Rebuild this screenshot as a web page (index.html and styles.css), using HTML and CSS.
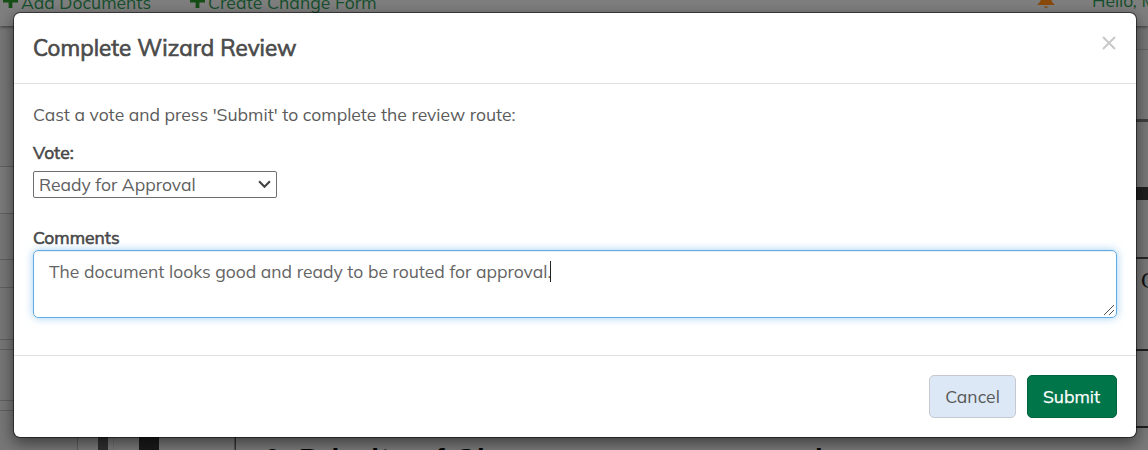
FILE: index.html
```html
<!DOCTYPE html>
<html lang="en">
<head>
<meta charset="utf-8">
<title>Complete Wizard Review</title>
<link rel="stylesheet" href="styles.css">
</head>
<body>
<div class="page">
  <header class="topbar">
    <svg class="plus" viewBox="0 0 16 16"><path d="M6 0h4v6h6v4h-6v6H6v-6H0V6h6z"/></svg>
    <span class="nav nav-add">Add Documents</span>
    <svg class="plus" viewBox="0 0 16 16"><path d="M6 0h4v6h6v4h-6v6H6v-6H0V6h6z"/></svg>
    <span class="nav nav-create">Create Change Form</span>
    <svg class="bell" viewBox="0 0 18 20"><path d="M9 0C5 1 4 4 4 8c0 4-1 5.500-4 8h18c-3-2.500-4-4-4-8 0-4-1-7-5-8zM6.500 17.500h5L9 19.500z"/></svg>
    <span class="nav nav-user">Hello, M</span>
  </header>
  <main class="content">
    <div class="side">
      <div class="row r1"></div><div class="row r2"></div><div class="row r3"></div><div class="row r4"></div><div class="row r5"></div><div class="row r6"></div><div class="row r7"></div><div class="row r8"></div>
    </div>
    <div class="sheet">
      <span class="bar bar-a"></span><span class="bar bar-b"></span><span class="bar bar-c"></span><span class="bar bar-d"></span><span class="bar bar-e"></span>
      <div class="doc-title"><span>6. Priority of Ch</span><span>i</span></div>
    </div>
    <div class="edge">
      <div class="e e1"></div><div class="e e2"></div><div class="e e3"></div><div class="e e4"></div><div class="e e5">C</div><div class="e e6"></div>
    </div>
  </main>
</div>
<div class="modal">
  <div class="modal-header">
    <h4 class="title">Complete Wizard Review</h4>
    <svg class="close" viewBox="0 0 14 14"><path d="M1 1l12 12M13 1L1 13"/></svg>
  </div>
  <div class="modal-body">
    <p class="intro">Cast a vote and press 'Submit' to complete the review route:</p>
    <div class="label label-vote">Vote:</div>
    <div class="select"><span class="select-text">Ready for Approval</span><svg class="chevron" viewBox="0 0 12 8"><path d="M1 1l5 5 5-5"/></svg></div>
    <div class="label label-comments">Comments</div>
    <div class="textarea"><span class="comment-text">The document looks good and ready to be routed for approval.</span><span class="caret"></span><svg class="grip" viewBox="0 0 10 10"><path d="M0 10L10 0M5 10l5-5"/></svg></div>
  </div>
  <div class="modal-footer">
    <button class="btn cancel"><span>Cancel</span></button>
    <button class="btn submit"><span>Submit</span></button>
  </div>
</div>
</body>
</html>
```
FILE: styles.css
```css
* { box-sizing: border-box; }
body { margin: 0; width: 1148px; height: 450px; overflow: hidden; position: relative; font-family: Muli, Mulish, Lato, sans-serif; background: #777; color: #505050; }
.page { height: 450px; display: flex; flex-direction: column; }
.topbar { height: 26px; flex: none; display: flex; align-items: flex-start; background: #7f7f7f; box-shadow: 0 1px 3px rgba(0,0,0,.5); z-index: 1; padding-left: 3px; }
.plus { width: 15px; height: 15px; margin-top: -7px; fill: #164f16; flex: none; }
.nav { font-size: 17.5px; line-height: 22px; margin-top: -9px; color: #164f2c; white-space: nowrap; flex: none; }
.nav-add { margin-left: 3px; width: 169px; }
.nav-create { margin-left: 3px; width: 829px; letter-spacing: .08px; }
.bell { width: 18px; height: 20px; margin-top: -11px; fill: #8a4a0a; flex: none; }
.nav-user { margin-left: 37px; margin-top: -11px; width: 80px; }
.content { flex: 1; display: flex; min-height: 0; }
.side { width: 78px; border-right: 1px solid #5c5c5c; background: #777; }
.row { border-bottom: 1px solid #606060; }
.r1 { height: 141px; } .r2 { height: 47px; background: #7b7b7b; } .r3 { height: 46px; }
.r4 { height: 28px; } .r5 { height: 52px; } .r6 { height: 10px; } .r7 { height: 51px; } .r8 { height: 10px; }
.sheet { flex: 1; display: flex; background: #7a7a7a; overflow: hidden; }
.bar { flex: none; }
.bar-a { width: 10px; margin-left: 20px; background: #303030; }
.bar-b { width: 1px; margin-left: 5px; background: #707070; }
.bar-c { width: 20px; margin-left: 25px; background: #1a1a1a; }
.bar-d { width: 1px; margin-left: 75px; background: #555; }
.bar-e { width: 1px; background: #333; }
.doc-title { display: flex; margin: 417px 0 0 28px; font: bold 28px/32px "Liberation Sans", sans-serif; letter-spacing: 1.35px; color: #050505; white-space: nowrap; }
.doc-title span:first-child { width: 551px; }
.edge { width: 12px; overflow: hidden; background: #7a7a7a; }
.e1 { height: 24px; border-bottom: 1px solid #666; background: #777; }
.e2 { height: 72px; border-bottom: 3px solid #414141; }
.e3 { height: 78px; border-bottom: 13px solid #202020; }
.e4 { height: 59px; border-bottom: 2px solid #282828; }
.e5 { height: 92px; border-bottom: 2px solid #202020; font: 23px/44px "Liberation Serif", serif; color: #111; padding-left: 5px; }
.e6 { height: 77px; border-bottom: 2px solid #202020; }
.modal { position: absolute; left: 13px; top: 12px; width: 1124px; height: 426px; border: 1px solid rgba(0,0,0,.5); background: #fff; background-clip: padding-box; border-radius: 7px; box-shadow: 0 5px 15px rgba(0,0,0,.5); display: flex; flex-direction: column; z-index: 2; }
.modal-header { height: 71px; flex: none; border-bottom: 1px solid #e2e2e2; display: flex; justify-content: space-between; padding: 0 20px 0 19px; }
.title { margin: 21px 0 0; font-size: 22.4px; line-height: 28px; font-weight: 400; letter-spacing: .07px; color: #4b4b4b; -webkit-text-stroke: .7px #4b4b4b; white-space: nowrap; }
.close { width: 14px; height: 14px; margin-top: 23px; fill: none; stroke: #c8c8c8; stroke-width: 2; }
.modal-body { height: 271px; flex: none; padding: 19px 19px 0; }
.intro { margin: 0; height: 24px; font-size: 17.5px; line-height: 22px; color: #5b5b5b; white-space: nowrap; }
.label { font-size: 17.5px; line-height: 22px; color: #484848; -webkit-text-stroke: .6px #484848; }
.label-vote { margin-top: 14px; height: 30px; }
.select { width: 244px; height: 27px; border: 1px solid #6e6e6e; border-radius: 2px; display: flex; align-items: center; justify-content: space-between; padding: 0 5px; }
.select-text { height: 24px; font-size: 17.5px; line-height: 22px; color: #606060; white-space: nowrap; }
.chevron { width: 13px; height: 9px; fill: none; stroke: #444; stroke-width: 2; }
.label-comments { margin-top: 28px; height: 24px; }
.textarea { position: relative; height: 68px; border: 1px solid #5fade8; border-radius: 5px; box-shadow: 0 0 8px rgba(102,175,233,.6), inset 0 1px 1px rgba(0,0,0,.07); padding: 9px 15px; display: flex; align-items: flex-start; }
.comment-text { font-size: 17.5px; line-height: 22px; color: #646464; white-space: nowrap; }
.caret { width: 1px; height: 21px; margin: 1px 0 0 -1px; background: #222; }
.grip { position: absolute; right: 2px; bottom: 2px; width: 10px; height: 10px; fill: none; stroke: #555; stroke-width: 1; }
.modal-footer { flex: 1; border-top: 1px solid #e2e2e2; display: flex; justify-content: flex-end; gap: 11px; padding: 19px 19px 0 0; }
.btn { height: 43px; border-radius: 5px; padding: 0 0 2px; font: 17.5px/24px Muli, Mulish, Lato, sans-serif; }
.cancel { width: 87px; background: #dce8f5; border: 1px solid #c6cad0; color: #585858; }
.submit { width: 90px; padding-right: 1px; background: #007549; border: 1px solid #00653f; color: #fff; -webkit-text-stroke: .25px #fff; }
```
